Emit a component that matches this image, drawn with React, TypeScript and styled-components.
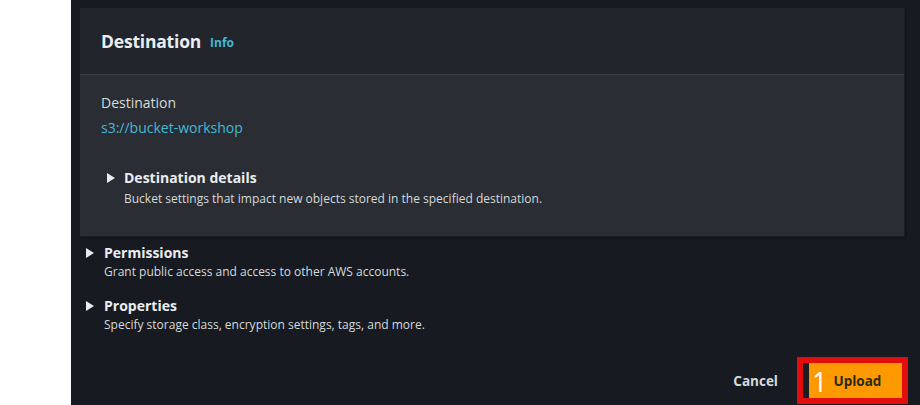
import React from "react";
import styled, { createGlobalStyle } from "styled-components";

const Global = createGlobalStyle`
  html, body { margin: 0; padding: 0; background: #ffffff; }
  body { font-family: "Open Sans", "Noto Sans", sans-serif; }
  * { box-sizing: border-box; }
`;

const Page = styled.div`
  display: flex;
  width: 920px;
  height: 405px;
  overflow: hidden;
`;

const Gutter = styled.div`
  width: 71px;
  flex: none;
  background: #ffffff;
`;

const Main = styled.main`
  flex: 1;
  background: #171a21;
  padding: 8px 16px 0 9px;
  display: flex;
  flex-direction: column;
`;

const Card = styled.section`
  background: #2a2d33;
  box-shadow: 1px 1px 0 #1c1f24, 2px 2px 2px rgba(0, 0, 0, 0.35);
  height: 228px;
  display: flex;
  flex-direction: column;
`;

const CardHeader = styled.header`
  height: 67px;
  background: #22252c;
  border-bottom: 1px solid #3a3e45;
  display: flex;
  align-items: center;
  padding: 0 21px;
  gap: 9px;
`;

const Title = styled.h2`
  margin: 0;
  font-size: 17.5px;
  font-weight: 700;
  color: #eaedf0;
  letter-spacing: -0.2px;
`;

const InfoLink = styled.span`
  font-size: 12px;
  font-weight: 700;
  color: #44b9d6;
  margin-top: 2px;
`;

const CardBody = styled.div`
  padding: 18px 21px 0;
  display: flex;
  flex-direction: column;
`;

const Label = styled.div`
  font-size: 14px;
  color: #d5dbdb;
  line-height: 20px;
`;

const Link = styled.div`
  font-size: 14px;
  color: #44b9d6;
  line-height: 20px;
  margin-top: 5px;
`;

const Expander = styled.div<{ $indent: number; $mt: number; $gap: number }>`
  display: flex;
  gap: ${(p) => p.$gap}px;
  padding-left: ${(p) => p.$indent}px;
  margin-top: ${(p) => p.$mt}px;
`;

const Caret = styled.span`
  width: 0;
  height: 0;
  border-top: 5px solid transparent;
  border-bottom: 5px solid transparent;
  border-left: 8px solid #e9ebed;
  margin-top: 5px;
  flex: none;
`;

const ExpText = styled.div`
  display: flex;
  flex-direction: column;
`;

const ExpTitle = styled.div`
  font-size: 14px;
  font-weight: 700;
  color: #eaedf0;
  line-height: 19px;
`;

const ExpDesc = styled.div<{ $mt?: number }>`
  font-size: 12px;
  color: #d5dbdb;
  line-height: 17px;
  margin-top: ${(p) => p.$mt ?? 1}px;
`;

const Footer = styled.div`
  margin-top: auto;
  display: flex;
  justify-content: flex-end;
  align-items: center;
  gap: 19px;
  padding-bottom: 1px;
  margin-right: -4px;
`;

const Cancel = styled.button`
  background: none;
  border: none;
  font-family: inherit;
  font-size: 13.5px;
  font-weight: 700;
  color: #d5dbdb;
  padding: 0;
`;

const Highlight = styled.div`
  border: 6px solid #e30d0d;
  width: 111px;
  height: 47px;
  display: flex;
  background: #e30d0d;
`;

const UploadButton = styled.button`
  flex: 1;
  border: none;
  border-left: 6px solid #1b1d22;
  background: #ff9900;
  display: flex;
  align-items: center;
  padding: 0 0 0 3px;
  gap: 6px;
  font-family: inherit;
`;

const Step = styled.span`
  font-size: 27px;
  color: #ffffff;
  font-weight: 400;
  line-height: 1;
  margin-top: 2px;
`;

const UploadLabel = styled.span`
  font-size: 13.5px;
  font-weight: 700;
  color: #2b2a1c;
`;

export default function App() {
  return (
    <>
      <Global />
      <Page>
        <Gutter />
        <Main>
          <Card>
            <CardHeader>
              <Title>Destination</Title>
              <InfoLink>Info</InfoLink>
            </CardHeader>
            <CardBody>
              <Label>Destination</Label>
              <Link>s3://bucket-workshop</Link>
              <Expander $indent={6} $mt={30} $gap={9}>
                <Caret />
                <ExpText>
                  <ExpTitle>Destination details</ExpTitle>
                  <ExpDesc $mt={3}>Bucket settings that impact new objects stored in the specified destination.</ExpDesc>
                </ExpText>
              </Expander>
            </CardBody>
          </Card>
          <Expander $indent={6} $mt={7} $gap={10}>
            <Caret />
            <ExpText>
              <ExpTitle>Permissions</ExpTitle>
              <ExpDesc>Grant public access and access to other AWS accounts.</ExpDesc>
            </ExpText>
          </Expander>
          <Expander $indent={6} $mt={16} $gap={10}>
            <Caret />
            <ExpText>
              <ExpTitle>Properties</ExpTitle>
              <ExpDesc>Specify storage class, encryption settings, tags, and more.</ExpDesc>
            </ExpText>
          </Expander>
          <Footer>
            <Cancel>Cancel</Cancel>
            <Highlight>
              <UploadButton>
                <Step>1</Step>
                <UploadLabel>Upload</UploadLabel>
              </UploadButton>
            </Highlight>
          </Footer>
        </Main>
      </Page>
    </>
  );
}
